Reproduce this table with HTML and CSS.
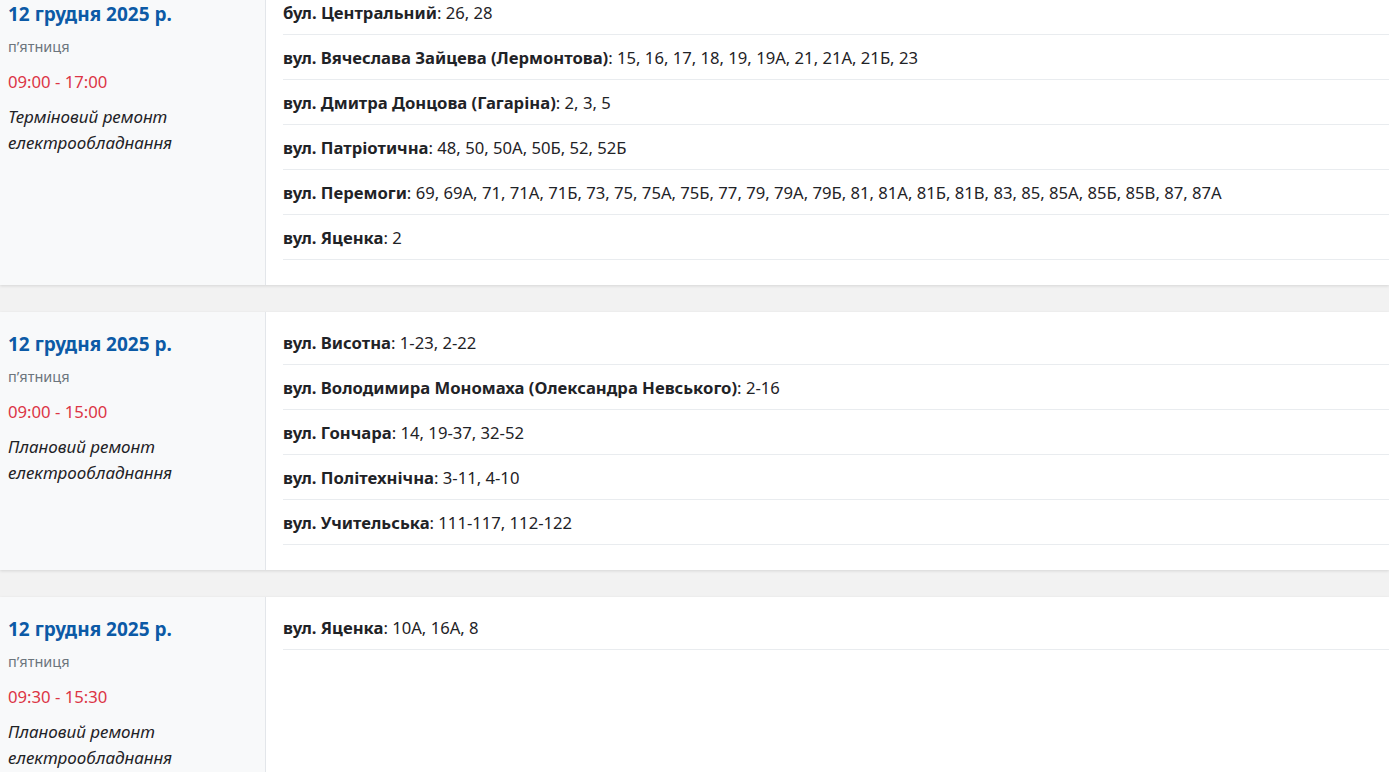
FILE: index.html
```html
<!DOCTYPE html>
<html lang="uk">
<head>
<meta charset="utf-8">
<link rel="stylesheet" href="styles.css">
</head>
<body>
<div class="list">
  <div class="card">
    <div class="info">
      <div class="date">12 грудня 2025 р.</div>
      <div class="day">п’ятниця</div>
      <div class="time">09:00 - 17:00</div>
      <div class="desc">Терміновий ремонт електрообладнання</div>
    </div>
    <div class="addrs">
      <div class="row"><b>бул. Центральний</b>: 26, 28</div>
      <div class="row"><b>вул. Вячеслава Зайцева (Лермонтова)</b>: 15, 16, 17, 18, 19, 19А, 21, 21А, 21Б, 23</div>
      <div class="row"><b>вул. Дмитра Донцова (Гагаріна)</b>: 2, 3, 5</div>
      <div class="row"><b>вул. Патріотична</b>: 48, 50, 50А, 50Б, 52, 52Б</div>
      <div class="row"><b>вул. Перемоги</b>: 69, 69А, 71, 71А, 71Б, 73, 75, 75А, 75Б, 77, 79, 79А, 79Б, 81, 81А, 81Б, 81В, 83, 85, 85А, 85Б, 85В, 87, 87А</div>
      <div class="row"><b>вул. Яценка</b>: 2</div>
    </div>
  </div>
  <div class="card">
    <div class="info">
      <div class="date">12 грудня 2025 р.</div>
      <div class="day">п’ятниця</div>
      <div class="time">09:00 - 15:00</div>
      <div class="desc">Плановий ремонт електрообладнання</div>
    </div>
    <div class="addrs">
      <div class="row"><b>вул. Висотна</b>: 1-23, 2-22</div>
      <div class="row"><b>вул. Володимира Мономаха (Олександра Невського)</b>: 2-16</div>
      <div class="row"><b>вул. Гончара</b>: 14, 19-37, 32-52</div>
      <div class="row"><b>вул. Політехнічна</b>: 3-11, 4-10</div>
      <div class="row"><b>вул. Учительська</b>: 111-117, 112-122</div>
    </div>
  </div>
  <div class="card">
    <div class="info">
      <div class="date">12 грудня 2025 р.</div>
      <div class="day">п’ятниця</div>
      <div class="time">09:30 - 15:30</div>
      <div class="desc">Плановий ремонт електрообладнання</div>
    </div>
    <div class="addrs">
      <div class="row"><b>вул. Яценка</b>: 10А, 16А, 8</div>
    </div>
  </div>
</div>
</body>
</html>
```
FILE: styles.css
```css
html, body {
  margin: 0;
  padding: 0;
  background: #f2f2f2;
  font-family: "Noto Sans", "Open Sans", sans-serif;
  color: #1f2327;
  overflow: hidden;
}
.list {
  margin-top: -18px;
  display: flex;
  flex-direction: column;
  gap: 27px;
}
.card {
  display: flex;
  background: #fff;
  box-shadow: 0 1px 3px rgba(0,0,0,0.12);
}
.info {
  width: 257px;
  flex: none;
  background: #f8f9fa;
  border-right: 1px solid #e3e6ea;
  padding: 21px 0 20px 8px;
}
.date {
  font-size: 19px;
  font-weight: 700;
  line-height: 22px;
  color: #0c5aa6;
}
.day {
  margin-top: 11px;
  font-size: 14.5px;
  line-height: 20px;
  color: #6c757d;
}
.time {
  margin-top: 14px;
  font-size: 16.7px;
  line-height: 24px;
  color: #dc3545;
}
.desc {
  margin-top: 10px;
  font-size: 17px;
  line-height: 26px;
  font-style: italic;
  width: 220px;
}
.addrs {
  flex: 1;
  padding: 8px 0 25px 17px;
}
.row {
  font-size: 16.65px;
  line-height: 24px;
  padding: 11px 0 9px;
  border-bottom: 1px solid #e9ecef;
  white-space: nowrap;
}
.row b {
  font-weight: 700;
}
```
